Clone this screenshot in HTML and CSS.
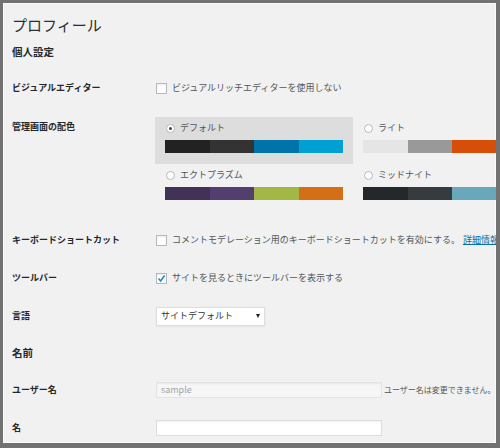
FILE: index.html
```html
<!DOCTYPE html>
<html lang="ja">
<head>
<meta charset="utf-8">
<title>プロフィール</title>
<link rel="stylesheet" href="styles.css">
</head>
<body>
<div class="frame">
  <div class="wrap">
    <h1 class="title">プロフィール</h1>
    <h2 class="section">個人設定</h2>

    <div class="row">
      <div class="label">ビジュアルエディター</div>
      <div class="field"><span class="cb"></span><span class="txt">ビジュアルリッチエディターを使用しない</span></div>
    </div>

    <div class="row row-scheme">
      <div class="label label-top">管理画面の配色</div>
      <div class="schemes">
        <div class="opt selected fresh">
          <div class="opt-label"><span class="radio on"></span>デフォルト</div>
          <div class="bar"><span></span><span></span><span></span><span></span></div>
        </div>
        <div class="opt light">
          <div class="opt-label"><span class="radio"></span>ライト</div>
          <div class="bar"><span></span><span></span><span></span><span></span></div>
        </div>
        <div class="opt ecto">
          <div class="opt-label"><span class="radio"></span>エクトプラズム</div>
          <div class="bar"><span></span><span></span><span></span><span></span></div>
        </div>
        <div class="opt midnight">
          <div class="opt-label"><span class="radio"></span>ミッドナイト</div>
          <div class="bar"><span></span><span></span><span></span><span></span></div>
        </div>
      </div>
    </div>

    <div class="row">
      <div class="label">キーボードショートカット</div>
      <div class="field"><span class="cb"></span><span class="txt">コメントモデレーション用のキーボードショートカットを有効にする。</span><a class="link" href="#">詳細情報</a></div>
    </div>

    <div class="row">
      <div class="label">ツールバー</div>
      <div class="field"><span class="cb checked"><svg width="9" height="9" viewBox="0 0 9 9"><path d="M1.6 4.6 L3.6 6.9 L7.6 1.6" fill="none" stroke="#1e8cbe" stroke-width="1.6"/></svg></span><span class="txt">サイトを見るときにツールバーを表示する</span></div>
    </div>

    <div class="row">
      <div class="label">言語</div>
      <div class="field"><div class="select"><span>サイトデフォルト</span><span class="arrow"></span></div></div>
    </div>

    <h2 class="section second">名前</h2>

    <div class="row">
      <div class="label">ユーザー名</div>
      <div class="field"><div class="input disabled">sample</div><span class="note">ユーザー名は変更できません。</span></div>
    </div>

    <div class="row">
      <div class="label">名</div>
      <div class="field"><div class="input"></div></div>
    </div>
  </div>
</div>
</body>
</html>
```

FILE: styles.css
```css
* { box-sizing: border-box; margin: 0; padding: 0; }

html, body {
  width: 500px;
  height: 448px;
  overflow: hidden;
  background: #707070;
}

body {
  font-family: "Noto Sans CJK JP", "Noto Sans", sans-serif;
  color: #23282d;
}

.frame {
  width: 500px;
  height: 448px;
  border: 3px solid #727272;
  border-right-width: 4px;
  border-bottom-width: 5px;
  background: #f1f1f1;
  box-shadow: inset 0 0 0 1px #fbfbfb;
  overflow: hidden;
}

.wrap {
  width: 640px;
  padding: 12px 0 0 9px;
}

.title {
  font-size: 15px;
  font-weight: 400;
  line-height: 20px;
  height: 20px;
  color: #2a2e33;
}

.section {
  font-size: 10.5px;
  font-weight: 700;
  line-height: 14px;
  height: 14px;
  margin: 10px 0;
  color: #23282d;
}

.section.second {
  margin: 11px 0;
}

.row {
  display: flex;
  align-items: center;
  height: 38px;
}

.label {
  width: 144px;
  flex: 0 0 144px;
  font-size: 9px;
  font-weight: 700;
  line-height: 12px;
  color: #23282d;
}

.field {
  display: flex;
  align-items: center;
  font-size: 9px;
  line-height: 12px;
  color: #50555a;
  white-space: nowrap;
}

.cb {
  width: 11px;
  height: 11px;
  flex: 0 0 11px;
  border: 1px solid #b4b9be;
  background: #fff;
  box-shadow: inset 0 1px 2px rgba(0, 0, 0, 0.08);
  margin-right: 5px;
  display: flex;
  align-items: center;
  justify-content: center;
}

.link {
  color: #0073aa;
  text-decoration: underline;
  margin-left: 3px;
}

/* colour schemes */
.row-scheme {
  height: auto;
  align-items: flex-start;
  padding: 10px 0 10px;
}

.label-top {
  margin-top: 4px;
}

.schemes {
  margin-left: -1px;
  display: grid;
  grid-template-columns: 198px 198px;
}

.opt {
  padding: 5px 10px 11px;
}

.opt.selected {
  background: #dddddd;
}

.opt-label {
  display: flex;
  align-items: center;
  font-size: 9px;
  line-height: 12px;
  height: 12px;
  color: #50555a;
  white-space: nowrap;
}

.radio {
  width: 9px;
  height: 9px;
  border-radius: 50%;
  border: 1px solid #b4b9be;
  background: #fff;
  margin: 0 5px 0 1px;
  display: flex;
  align-items: center;
  justify-content: center;
}

.radio.on::before {
  content: "";
  width: 3px;
  height: 3px;
  border-radius: 50%;
  background: #444;
}

.bar {
  display: flex;
  height: 13px;
  margin-top: 6px;
  width: 178px;
}

.bar span {
  flex: 1 1 0;
}

.fresh .bar span:nth-child(1) { background: #222222; }
.fresh .bar span:nth-child(2) { background: #333333; }
.fresh .bar span:nth-child(3) { background: #0073aa; }
.fresh .bar span:nth-child(4) { background: #00a0d2; }

.light .bar span:nth-child(1) { background: #e5e5e5; }
.light .bar span:nth-child(2) { background: #999999; }
.light .bar span:nth-child(3) { background: #d64e07; }
.light .bar span:nth-child(4) { background: #04a4cc; }

.ecto .bar span:nth-child(1) { background: #413256; }
.ecto .bar span:nth-child(2) { background: #523f6d; }
.ecto .bar span:nth-child(3) { background: #a3b745; }
.ecto .bar span:nth-child(4) { background: #d46f15; }

.midnight .bar span:nth-child(1) { background: #25282b; }
.midnight .bar span:nth-child(2) { background: #363b3f; }
.midnight .bar span:nth-child(3) { background: #69a8bb; }
.midnight .bar span:nth-child(4) { background: #e14d43; }

/* select */
.select {
  width: 109px;
  height: 19px;
  border: 1px solid #dddddd;
  background: #fff;
  box-shadow: 0 1px 2px rgba(0, 0, 0, 0.06);
  display: flex;
  align-items: center;
  justify-content: space-between;
  padding: 0 4px 0 4px;
  color: #32373c;
}

.arrow {
  width: 0;
  height: 0;
  border-left: 2.5px solid transparent;
  border-right: 2.5px solid transparent;
  border-top: 4px solid #222;
}

/* inputs */
.input {
  width: 226px;
  height: 16px;
  border: 1px solid #dddddd;
  background: #fff;
  box-shadow: inset 0 1px 2px rgba(0, 0, 0, 0.06);
  padding-left: 4px;
  font-size: 9px;
  line-height: 14px;
}

.input.disabled {
  background: #f6f6f6;
  border-color: #e4e4e4;
  color: #a0a5aa;
}

.note {
  margin-left: 2px;
  font-size: 8px;
  color: #555;
}
```
